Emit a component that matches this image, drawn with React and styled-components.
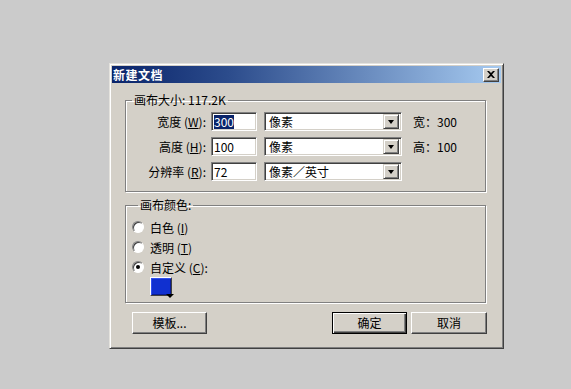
import React from "react";
import styled, { createGlobalStyle } from "styled-components";

const GlobalStyle = createGlobalStyle`
  html, body { margin: 0; padding: 0; background: #cbcbcb; }
  body {
    font-family: "Noto Sans CJK SC", "Noto Sans", sans-serif;
    font-size: 12px;
    color: #000;
  }
`;

const Page = styled.div`
  width: 571px;
  height: 389px;
  box-sizing: border-box;
  padding: 63px 0 0 109px;
`;

const Dialog = styled.div`
  width: 395px;
  height: 286px;
  box-sizing: border-box;
  background: #d4d0c8;
  border: 1px solid;
  border-color: #e4e2dd #404040 #404040 #e4e2dd;
  box-shadow: inset 1px 1px #fff, inset -1px -1px #808080;
  padding: 2px;
  display: flex;
  flex-direction: column;
`;

const TitleBar = styled.div`
  height: 17px;
  display: flex;
  align-items: center;
  justify-content: space-between;
  padding: 0 2px 0 1px;
  background: linear-gradient(to right, #0a246a 0%, #2c4c8c 30%, #a6caf0 100%);
`;

const Title = styled.span`
  color: #fff;
  font-weight: bold;
  font-size: 12px;
  line-height: 17px;
  letter-spacing: 0.5px;
`;

const CloseButton = styled.div`
  width: 16px;
  height: 14px;
  box-sizing: border-box;
  background: #d4d0c8;
  border: 1px solid;
  border-color: #fff #404040 #404040 #fff;
  box-shadow: inset -1px -1px #808080;
  display: flex;
  align-items: center;
  justify-content: center;
`;

const Body = styled.div`
  display: flex;
  flex-direction: column;
  padding: 9px 15px 0 13px;
`;

const Group = styled.fieldset`
  margin: ${(p) => p.$top || 0}px 0 0 0;
  padding: ${(p) => p.$pad};
  border: 1px solid #808080;
  box-shadow: inset 1px 1px #fff, 1px 1px #fff;
  min-width: 0;
`;

const Legend = styled.legend`
  margin-left: 6px;
  padding: 0 2px;
  line-height: 16px;
  height: 16px;
`;

const Rows = styled.div`
  display: flex;
  flex-direction: column;
  gap: 6px;
`;

const Row = styled.div`
  display: flex;
  align-items: center;
  height: 19px;
`;

const Label = styled.span`
  width: 80px;
  text-align: right;
  white-space: nowrap;
  margin-right: 5px;
`;

const Hot = styled.span`
  text-decoration: underline;
`;

const Input = styled.div`
  width: 46px;
  height: 19px;
  box-sizing: border-box;
  background: #fff;
  border: 1px solid;
  border-color: #808080 #fff #fff #808080;
  box-shadow: inset 1px 1px #404040, inset -1px -1px #d4d0c8;
  padding-left: 2px;
  display: flex;
  align-items: center;
  margin-right: 7px;
`;

const Selected = styled.span`
  background: #0a246a;
  color: #fff;
  line-height: 14px;
`;

const Select = styled.div`
  width: 138px;
  height: 19px;
  box-sizing: border-box;
  background: #fff;
  border: 1px solid;
  border-color: #808080 #fff #fff #808080;
  box-shadow: inset 1px 1px #404040, inset -1px -1px #d4d0c8;
  padding: 2px 2px 2px 4px;
  display: flex;
  align-items: center;
  justify-content: space-between;
  margin-right: 11px;
`;

const DropButton = styled.div`
  width: 16px;
  height: 15px;
  box-sizing: border-box;
  background: #d4d0c8;
  border: 1px solid;
  border-color: #d4d0c8 #404040 #404040 #d4d0c8;
  box-shadow: inset 1px 1px #fff, inset -1px -1px #808080;
  display: flex;
  align-items: center;
  justify-content: center;
`;

const Arrow = styled.span`
  width: 0;
  height: 0;
  border-left: 3.5px solid transparent;
  border-right: 3.5px solid transparent;
  border-top: 4px solid #000;
`;

const Info = styled.span`
  white-space: nowrap;
`;

const RadioRow = styled.div`
  display: flex;
  align-items: center;
  height: 20px;
  gap: 6px;
`;

const Radio = styled.span`
  width: 12px;
  height: 12px;
  box-sizing: border-box;
  border-radius: 50%;
  background: #fff;
  border: 1px solid;
  border-color: #808080 #fff #fff #808080;
  box-shadow: inset 1px 1px #404040;
  display: flex;
  align-items: center;
  justify-content: center;
  &::after {
    content: "";
    width: 4px;
    height: 4px;
    border-radius: 50%;
    background: ${(p) => (p.$checked ? "#000" : "transparent")};
  }
`;

const Swatch = styled.div`
  position: relative;
  width: 22px;
  height: 19px;
  box-sizing: border-box;
  margin-left: 18px;
  border: 1px solid;
  border-color: #fff #404040 #404040 #fff;
  background: #1030d0;
  box-shadow: inset 1px 1px #3050f0, inset -1px -1px #0a1c90;
`;

const SwatchArrow = styled.span`
  position: absolute;
  right: -3px;
  bottom: -3px;
  width: 0;
  height: 0;
  border-left: 4px solid transparent;
  border-right: 4px solid transparent;
  border-top: 4px solid #000;
`;

const ButtonRow = styled.div`
  display: flex;
  justify-content: space-between;
  margin: 9px -1px 0 7px;
`;

const ButtonGroup = styled.div`
  display: flex;
  gap: 4px;
`;

const Button = styled.div`
  width: ${(p) => p.$w || 75}px;
  height: 22px;
  box-sizing: border-box;
  background: #d4d0c8;
  border: 1px solid;
  border-color: ${(p) =>
    p.$default ? "#000" : "#fff #404040 #404040 #fff"};
  box-shadow: ${(p) =>
    p.$default
      ? "inset 1px 1px #fff, inset -1px -1px #404040, inset -2px -2px #808080"
      : "inset -1px -1px #808080"};
  display: flex;
  align-items: center;
  justify-content: center;
  padding-bottom: 1px;
`;

const sizeRows = [
  { label: "宽度", key: "W", value: "300", unit: "像素", info: "宽：300", selected: true },
  { label: "高度", key: "H", value: "100", unit: "像素", info: "高：100" },
  { label: "分辨率", key: "R", value: "72", unit: "像素／英寸" },
];

const colorOptions = [
  { label: "白色", key: "I" },
  { label: "透明", key: "T" },
  { label: "自定义", key: "C", checked: true, colon: true },
];

export default function App() {
  return (
    <>
      <GlobalStyle />
      <Page>
        <Dialog>
          <TitleBar>
            <Title>新建文档</Title>
            <CloseButton>
              <svg width="8" height="7" viewBox="0 0 8 7">
                <path d="M0 0 L2 0 L4 2 L6 0 L8 0 L5 3.5 L8 7 L6 7 L4 5 L2 7 L0 7 L3 3.5 Z" fill="#000" />
              </svg>
            </CloseButton>
          </TitleBar>
          <Body>
            <Group $pad="4px 0 10px 0">
              <Legend>画布大小: 117.2K</Legend>
              <Rows>
                {sizeRows.map((r) => (
                  <Row key={r.key}>
                    <Label>
                      {r.label} (<Hot>{r.key}</Hot>):
                    </Label>
                    <Input>
                      {r.selected ? <Selected>{r.value}</Selected> : r.value}
                    </Input>
                    <Select>
                      <span>{r.unit}</span>
                      <DropButton>
                        <Arrow />
                      </DropButton>
                    </Select>
                    {r.info && <Info>{r.info}</Info>}
                  </Row>
                ))}
              </Rows>
            </Group>
            <Group $top={5} $pad="4px 0 6px 6px">
              <Legend>画布颜色:</Legend>
              {colorOptions.map((o) => (
                <RadioRow key={o.key}>
                  <Radio $checked={o.checked} />
                  <span>
                    {o.label} (<Hot>{o.key}</Hot>){o.colon ? ":" : ""}
                  </span>
                </RadioRow>
              ))}
              <Swatch>
                <SwatchArrow />
              </Swatch>
            </Group>
            <ButtonRow>
              <Button>模板...</Button>
              <ButtonGroup>
                <Button $default>确定</Button>
                <Button $w={76}>取消</Button>
              </ButtonGroup>
            </ButtonRow>
          </Body>
        </Dialog>
      </Page>
    </>
  );
}
